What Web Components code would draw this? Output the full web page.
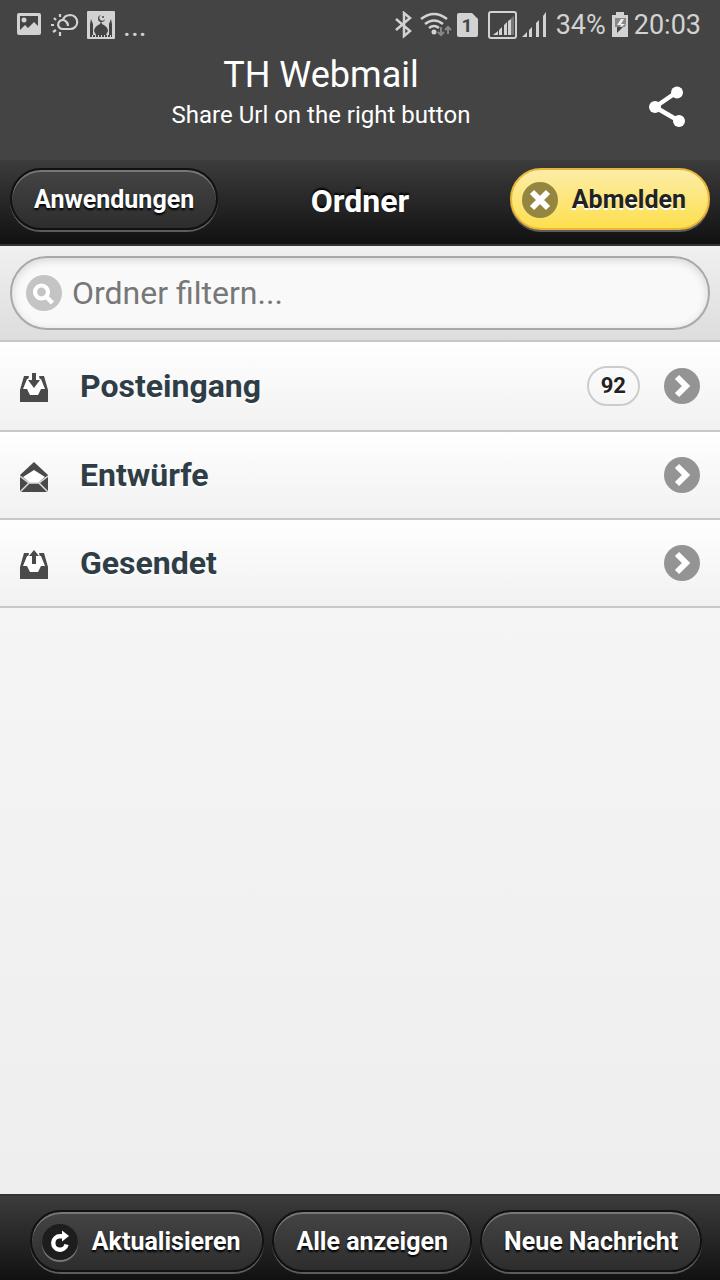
<!DOCTYPE html>
<html lang="de">
<head>
<meta charset="utf-8">
<meta name="viewport" content="width=device-width, initial-scale=1">
<title>TH Webmail</title>
<style>
  body {
    margin: 0;
    min-height: 100vh;
    display: flex;
    flex-direction: column;
    background: #eee;
    color: #222;
    font-family: Roboto, sans-serif;
  }
  main {
    flex: 1;
    background: linear-gradient(#f9f9f9, #eee);
  }
</style>
</head>
<body>
  <status-bar battery="34%" time="20:03"></status-bar>
  <app-header>
    TH Webmail
    <span slot="subtitle">Share Url on the right button</span>
  </app-header>
  <nav-bar>
    <pill-button slot="left">Anwendungen</pill-button>
    Ordner
    <pill-button slot="right" theme="yellow" icon="delete">Abmelden</pill-button>
  </nav-bar>
  <main>
    <filter-field placeholder="Ordner filtern..."></filter-field>
    <folder-row icon="inbox" count="92">Posteingang</folder-row>
    <folder-row icon="drafts">Entwürfe</folder-row>
    <folder-row icon="sent">Gesendet</folder-row>
  </main>
  <tool-bar>
    <pill-button icon="refresh">Aktualisieren</pill-button>
    <pill-button>Alle anzeigen</pill-button>
    <pill-button>Neue Nachricht</pill-button>
  </tool-bar>

<script>
const TRAY = `
  <path d="M0 17 4 3h5l-1 4h12l-1-4h5l4 14v12H0z" fill="#4a4a4a"/>
  <path d="M3 16 7 6h2V3h10v3h2l4 10h-4l-3 6h-8l-3-6z" fill="#fff"/>`

const FOLDER_ICONS = {
  inbox: `${TRAY}<path d="M12 0h4v7h4l-6 8-6-8h4z" fill="#4a4a4a"/>`,
  sent: `${TRAY}<path d="M14 0l5 6h-3v8h-4V6H9z" fill="#4a4a4a"/>`,
  drafts: `
    <path d="M0 13 14 0l14 13v17H0z" fill="#4a4a4a"/>
    <path d="M3 15 14 8l11 7-7 6h-8z" fill="#fff"/>
    <path d="M0 14 9 21h10l9-7M0 30l9-9M28 30l-9-9" fill="none" stroke="#ddd" stroke-width="1.5"/>`,
}

const BUTTON_ICONS = {
  delete: '<path d="M10 10 26 26M26 10 10 26" stroke="#fff" stroke-width="6" fill="none"/>',
  refresh: `
    <path d="M24.500 20.500A6.700 6.700 0 1 1 18 12.300H20" stroke="#fff" stroke-width="4.400" fill="none"/>
    <path d="M20 6.500l7 5.500-7 5.500z" fill="#fff"/>`,
}

/**
 * <status-bar> — phone status line
 *
 * Attributes: battery, time
 */
class StatusBar extends HTMLElement {
  constructor() {
    super()
    this.attachShadow({ mode: 'open' })
  }

  connectedCallback() {
    this.shadowRoot.innerHTML = `
      <style>
        :host {
          display: flex;
          justify-content: space-between;
          height: 50px;
          padding: 0 19px 0 16px;
          background: #444;
          color: #d2d2d2;
          font-size: 27px;
        }
        .group { display: flex; align-items: center; }
        .left { gap: 8px; }
        .dots { font-size: 30px; }
        svg { display: block; fill: #d2d2d2; flex-shrink: 0; }
        .right { gap: 5px; }
      </style>
      <div class="group left">
        <svg width="26" height="24" viewBox="0 0 26 24">
          <path fill-rule="evenodd" d="M3 0h20q2 0 2 2v18q0 2-2 2H3q-2 0-2-2V2q0-2 2-2zM4 3v14l5-5 3 3 6-6 4 4V3z"/>
          <circle cx="8" cy="7" r="2.500"/>
        </svg>
        <svg width="29" height="28" viewBox="0 0 29 28">
          <g fill="none" stroke="#d2d2d2" stroke-width="2.200">
            <path d="M20 18H12.500A4.500 4.500 0 1 1 16 10.500Q18 12 18 15"/>
            <path d="M13 9.500Q14 4 20.500 4A7 7 0 0 1 20 18"/>
            <path d="M1 14h3M4 7l2 2M10 3v3M3 21l3-2M10 21v4"/>
          </g>
        </svg>
        <svg width="28" height="28" viewBox="0 0 28 28">
          <rect width="28" height="28" rx="1"/>
          <g fill="#444">
            <path d="M14 10l1 3q6 3 6 7l-2 4H9l-2-4q0-4 6-7z"/>
            <path d="M4 8l2 5v11H3V13zM24 8l1 5v11h-3V13z"/>
            <path d="M14 4a3.500 3.500 0 1 0 4 4 3 3 0 1 1-4-4z"/>
            <circle cx="16" cy="6" r="1"/>
          </g>
          <path d="M3 25h22" stroke="#444" stroke-width="2" stroke-dasharray="2 1"/>
        </svg>
        <span class="dots">...</span>
      </div>
      <div class="group right">
        <svg width="22" height="28" viewBox="0 0 22 28">
          <path d="M3 8 17 20 11 25V2l6 5L3 19" fill="none" stroke="#d2d2d2" stroke-width="2.500"/>
        </svg>
        <svg width="32" height="26" viewBox="0 0 32 26">
          <g fill="none" stroke="#d2d2d2" stroke-width="2.500">
            <path d="M1 7Q14-3 27 7M5 12q9-7 18 0M9 16q5-4 10 0"/>
          </g>
          <circle cx="14" cy="20" r="2.500"/>
          <path d="M21 15v8M18 20l3 3 3-3M28 22v-7M25 18l3-3 3 3" fill="none" stroke="#888" stroke-width="2"/>
        </svg>
        <svg width="21" height="26" viewBox="0 0 21 26">
          <path d="M2 1h13l6 6v16q0 2-2 2H2q-2 0-2-2V3q0-2 2-2z"/>
          <text x="10" y="20" text-anchor="middle" font-family="Roboto, sans-serif" font-size="19" font-weight="700" fill="#444">1</text>
        </svg>
        <svg width="68" height="30" viewBox="0 0 68 30">
          <rect x="6" y="2" width="27" height="26" rx="2" fill="none" stroke="#d2d2d2" stroke-width="2"/>
          <path d="M10 25l5-4v4zM16 20l3-3v8h-3zM21 15l3-3v13h-3zM25 11l3-2v16h-3z"/>
          <path d="M28 8l3-2v19h-3z" fill="#777"/>
          <path d="M39 27l5-5v5zM46 20l3-3v10h-3zM53 13l3-3v17h-3zM60 6l3-4v25h-3z"/>
        </svg>
        <span>${this.getAttribute('battery')}</span>
        <svg width="18" height="26" viewBox="0 0 18 26">
          <path d="M5 0h8v3h4v22H1V3h4z"/>
          <path d="M4 6h11v6l-1 3H4z" fill="#888"/>
          <path d="M10 7h3l-3 5h4l-5 4 1-3H6z" fill="#eee"/>
          <path d="M6 15h6l-6 6z" fill="#444"/>
        </svg>
        <span>${this.getAttribute('time')}</span>
      </div>
    `
  }
}

/**
 * <app-header> — title, subtitle and share button
 */
class AppHeader extends HTMLElement {
  constructor() {
    super()
    this.attachShadow({ mode: 'open' }).innerHTML = `
      <style>
        :host {
          display: flex;
          height: 110px;
          background: #444;
          color: #fff;
        }
        .titles { flex: 1; text-align: center; }
        h1 { margin: 0; font-size: 36px; line-height: 50px; font-weight: 400; }
        .sub { margin: 0; font-size: 24px; line-height: 30px; }
        button {
          width: 78px;
          padding: 6px 28px 0 0;
          border: 0;
          background: none;
        }
      </style>
      <div class="titles">
        <h1><slot></slot></h1>
        <p class="sub"><slot name="subtitle"></slot></p>
      </div>
      <button type="button" aria-label="Share">
        <svg width="36" height="42" viewBox="0 0 36 42" fill="#fff">
          <path d="M28 6 6 21 30 35" fill="none" stroke="#fff" stroke-width="4.500"/>
          <circle cx="28" cy="6.500" r="6"/>
          <circle cx="6" cy="21" r="6"/>
          <circle cx="30" cy="35" r="6"/>
        </svg>
      </button>
    `
  }
}

/**
 * <nav-bar> — heading between a left and a right button
 */
class NavBar extends HTMLElement {
  constructor() {
    super()
    this.attachShadow({ mode: 'open' }).innerHTML = `
      <style>
        :host {
          display: grid;
          grid-template-columns: 1fr auto 1fr;
          align-items: start;
          padding: 8px 10px 10px;
          border-bottom: 2px solid #333;
          background: linear-gradient(#3c3c3c, #111);
          color: #fff;
        }
        h2 {
          margin: 0;
          font-size: 32px;
          line-height: 66px;
          font-weight: 700;
          text-shadow: 0 -2px 2px #000;
        }
        .right { justify-self: end; }
      </style>
      <div><slot name="left"></slot></div>
      <h2><slot></slot></h2>
      <div class="right"><slot name="right"></slot></div>
    `
  }
}

/**
 * <pill-button> — rounded button
 *
 * Attributes:
 *   theme — "dark" (default) | "yellow"
 *   icon  — "delete" | "refresh"
 */
class PillButton extends HTMLElement {
  constructor() {
    super()
    this.attachShadow({ mode: 'open' })
  }

  connectedCallback() {
    const icon = BUTTON_ICONS[this.getAttribute('icon')]

    this.shadowRoot.innerHTML = `
      <style>
        :host { display: block; }
        button {
          display: flex;
          align-items: center;
          gap: 14px;
          height: 62px;
          margin: 0 0 2px;
          padding: 2px 22px 0;
          border: 2px solid #111;
          border-radius: 31px;
          background: linear-gradient(#444, #2d2d2d);
          box-shadow: 0 2px 0 #5c5c5c, inset 0 2px 0 #777;
          color: #fff;
          font: 700 25px/30px Roboto, sans-serif;
          text-shadow: 0 2px 2px #000;
          white-space: nowrap;
        }
        button.icon { padding-left: 10px; }
        svg {
          border-radius: 50%;
          background: #1d1d1d;
          box-shadow: 0 2px 0 #777;
        }
        :host([theme="yellow"]) button {
          border-color: #e9b43a;
          background: linear-gradient(#fceda7, #fddf4e);
          box-shadow: 0 2px 0 #5c5c5c;
          color: #222;
          text-shadow: 0 2px 0 #fff;
        }
        :host([theme="yellow"]) svg { background: #948641; box-shadow: none; }
      </style>
      <button type="button" class="${icon ? 'icon' : ''}">
        ${icon ? `<svg width="36" height="36" viewBox="0 0 36 36">${icon}</svg>` : ''}
        <span><slot></slot></span>
      </button>
    `
  }
}

/**
 * <filter-field> — search box above the list
 *
 * Attributes: placeholder
 */
class FilterField extends HTMLElement {
  constructor() {
    super()
    this.attachShadow({ mode: 'open' })
  }

  connectedCallback() {
    const placeholder = this.getAttribute('placeholder') || ''

    this.shadowRoot.innerHTML = `
      <style>
        :host {
          display: block;
          padding: 10px;
          border-bottom: 2px solid #c8c8c8;
          background: linear-gradient(#f0f0f0, #ddd);
        }
        label {
          display: flex;
          align-items: center;
          gap: 10px;
          height: 70px;
          padding: 0 14px;
          border: 2px solid #a8a8a8;
          border-radius: 37px;
          background: #f9f9f9;
          box-shadow: inset 0 2px 8px rgba(0,0,0,0.15);
        }
        svg { flex-shrink: 0; }
        input {
          flex: 1;
          min-width: 0;
          padding: 0;
          border: 0;
          outline: 0;
          background: none;
          color: #333;
          font: 32px/40px Roboto, sans-serif;
        }
        input::placeholder { color: #777; }
      </style>
      <label>
        <svg width="36" height="36" viewBox="0 0 36 36">
          <circle cx="18" cy="18" r="18" fill="#c4c4c4"/>
          <circle cx="15.500" cy="17" r="6.500" fill="none" stroke="#fff" stroke-width="4.200"/>
          <path d="M20 21.500 26.500 28" stroke="#fff" stroke-width="4.500"/>
        </svg>
        <input type="search" placeholder="${placeholder}" aria-label="${placeholder}">
      </label>
    `
  }
}

/**
 * <folder-row> — link to one mail folder
 *
 * Attributes:
 *   icon  — "inbox" | "drafts" | "sent"
 *   count — unread messages
 */
class FolderRow extends HTMLElement {
  constructor() {
    super()
    this.attachShadow({ mode: 'open' })
  }

  connectedCallback() {
    const count = this.getAttribute('count')

    this.shadowRoot.innerHTML = `
      <style>
        :host { display: block; }
        a {
          display: flex;
          align-items: center;
          padding: 24px 20px;
          border-bottom: 2px solid #c8c8c8;
          background: linear-gradient(#fff, #f1f1f1);
          color: #2f3e46;
          font-size: 32px;
          line-height: 38px;
          font-weight: 700;
          text-decoration: none;
          text-shadow: 0 2px 0 #fff;
        }
        svg { display: block; flex-shrink: 0; }
        .folder { padding-top: 4px; }
        .name { flex: 1; margin-left: 32px; }
        .count {
          margin-right: 24px;
          padding: 0 12px;
          border: 2px solid #ccc;
          border-radius: 20px;
          color: #222;
          font-size: 22px;
          line-height: 36px;
        }
      </style>
      <a href="#">
        <svg class="folder" width="28" height="30" viewBox="0 0 28 30">${FOLDER_ICONS[this.getAttribute('icon')]}</svg>
        <span class="name"><slot></slot></span>
        ${count ? `<span class="count">${count}</span>` : ''}
        <svg width="36" height="36" viewBox="0 0 36 36">
          <circle cx="18" cy="18" r="18" fill="#949494"/>
          <path d="M13 9 22 18 13 27" fill="none" stroke="#fff" stroke-width="6"/>
        </svg>
      </a>
    `
  }
}

/**
 * <tool-bar> — buttons at the foot of the page
 */
class ToolBar extends HTMLElement {
  constructor() {
    super()
    this.attachShadow({ mode: 'open' }).innerHTML = `
      <style>
        :host {
          display: flex;
          justify-content: center;
          gap: 8px;
          padding: 14px 10px 6px 22px;
          border-top: 2px solid #333;
          background: linear-gradient(#3c3c3c, #111);
        }
      </style>
      <slot></slot>
    `
  }
}

customElements.define('status-bar', StatusBar)
customElements.define('app-header', AppHeader)
customElements.define('nav-bar', NavBar)
customElements.define('pill-button', PillButton)
customElements.define('filter-field', FilterField)
customElements.define('folder-row', FolderRow)
customElements.define('tool-bar', ToolBar)
</script>
</body>
</html>
